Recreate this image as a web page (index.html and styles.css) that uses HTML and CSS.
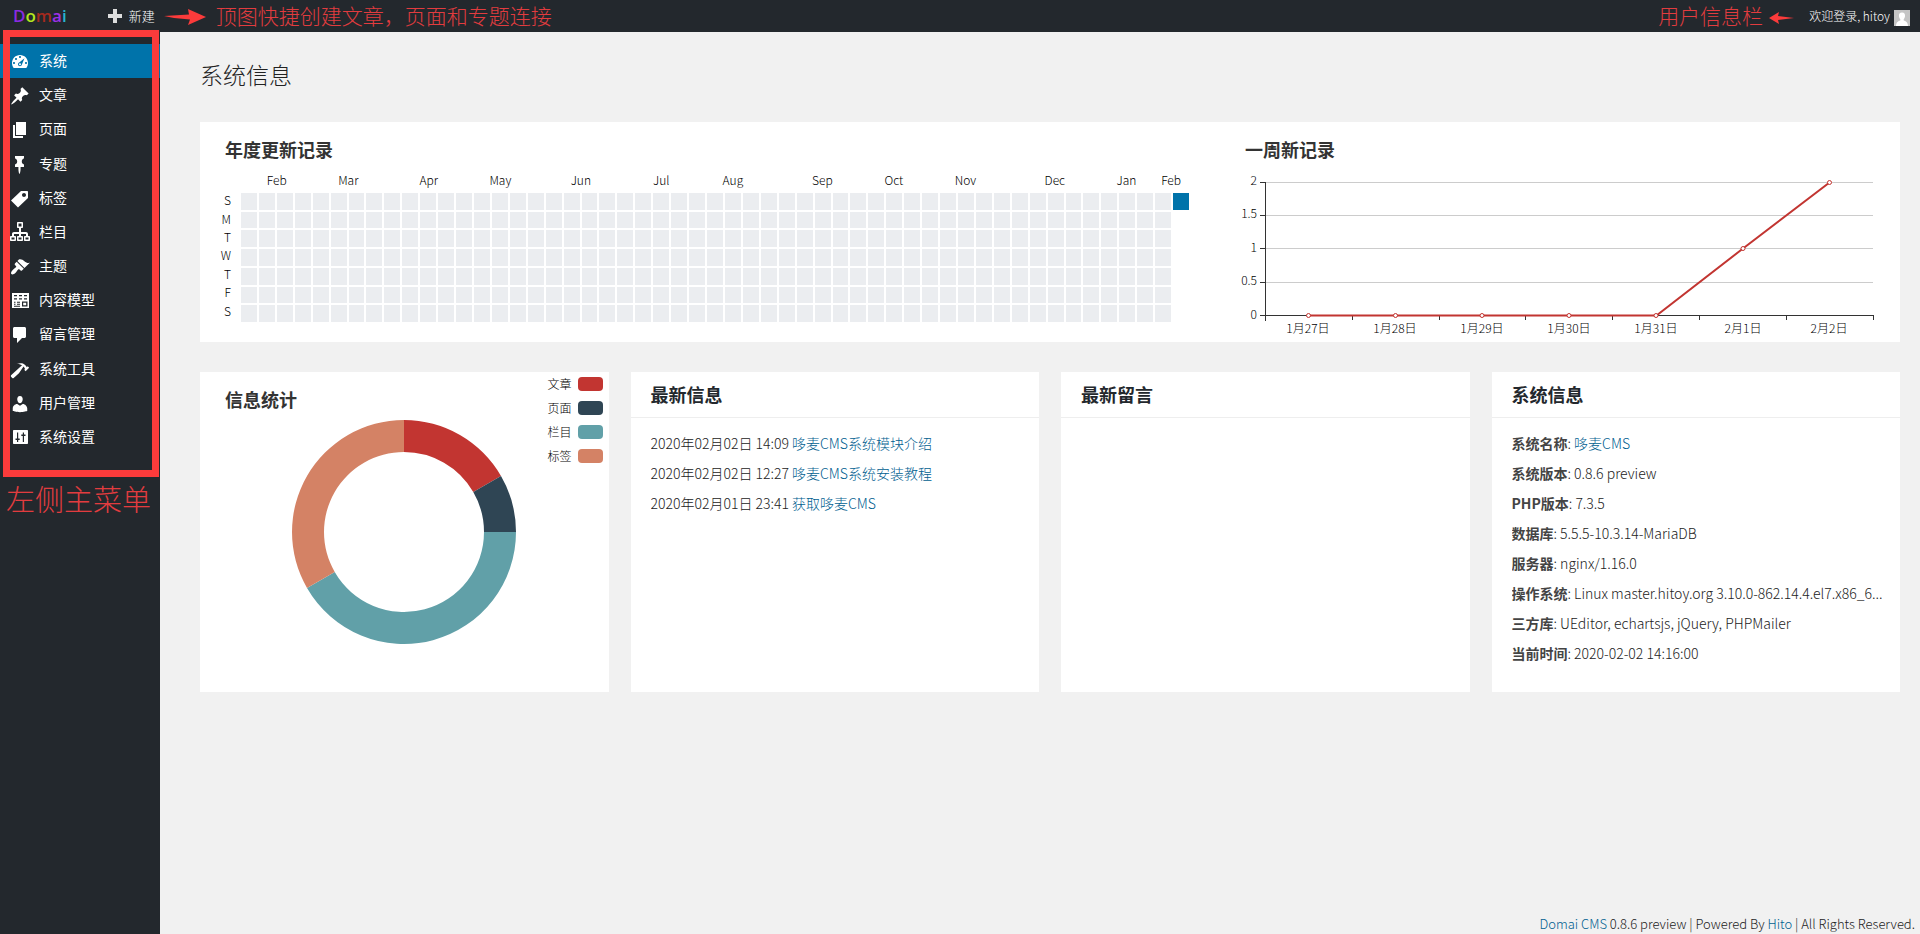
FILE: index.html
```html
<!DOCTYPE html>
<html lang="zh-CN">
<head>
<meta charset="utf-8">
<title>系统信息 - Domai CMS</title>
<link rel="stylesheet" href="styles.css">
</head>
<body>
<header class="topbar">
  <a class="logo" href="#"><span class="logo-d">D</span><span class="logo-o">o</span><span class="logo-m">m</span><span class="logo-a">a</span><span class="logo-i">i</span></a>
  <button class="new-button" type="button">
    <svg class="plus" viewBox="0 0 14 14"><path d="M5 0h4v5h5v4H9v5H5V9H0V5h5z"/></svg>新建
  </button>
  <div class="note note-new">
    <svg class="arrow-new" viewBox="0 0 42 16"><path d="M0 7L25 5.500 24 0 42 8 24 16 26 10.500 10 9z"/></svg>
    <span>顶图快捷创建文章，页面和专题连接</span>
  </div>
  <div class="note note-user">
    <span>用户信息栏</span>
    <svg class="arrow-user" viewBox="0 0 25 12"><path d="M0 6L10 0 9 4 25 6 9 8 10 12z"/></svg>
  </div>
  <a class="user" href="#">欢迎登录, hitoy
    <svg class="avatar" viewBox="0 0 16 16"><path fill="#c4c4c4" d="M0 0h16v16H0z"/><path fill="#fff" d="M8 2.500c2.300 0 3.300 1.700 3 3.800-.2 1.500-.7 2.300-1.300 2.900v1.300c2 .8 4 1.300 4.300 5.500H2c.3-4.200 2.300-4.700 4.300-5.500V9.200C5.700 8.600 5.200 7.800 5 6.300c-.3-2.100.7-3.800 3-3.800z"/></svg>
  </a>
</header>

<div class="shell">
  <aside class="sidebar">
    <nav>
      <ul class="menu">
        <li><a class="menu-link active" href="#"><svg class="icon" viewBox="0 0 20 20"><path fill-rule="evenodd" d="M3.760 16h12.480c1.100-1.370 1.760-3.110 1.760-5 0-4.420-3.580-8-8-8s-8 3.580-8 8c0 1.890.66 3.630 1.760 5zM10 4c.55 0 1 .45 1 1s-.45 1-1 1-1-.45-1-1 .45-1 1-1zM6 6c.55 0 1 .45 1 1s-.45 1-1 1-1-.45-1-1 .45-1 1-1zM14.500 6.200L11.900 12.600c-.2 1-1 1.700-1.900 1.700-1.100 0-2-.9-2-2 0-.8.500-1.500 1.200-1.800zM4 10c.55 0 1 .45 1 1s-.45 1-1 1-1-.45-1-1 .45-1 1-1zm12 0c.55 0 1 .45 1 1s-.45 1-1 1-1-.45-1-1 .45-1 1-1zm-5 2.300c0-.55-.45-1-1-1s-1 .45-1 1 .45 1 1 1 1-.45 1-1z"/></svg>系统</a></li>
        <li><a class="menu-link" href="#"><svg class="icon" viewBox="0 0 20 20"><path d="M10.440 3.020l1.820-1.820 6.360 6.350-1.830 1.820c-1.050-.68-2.480-.57-3.410.36l-.75.75c-.92.93-1.040 2.350-.35 3.410l-1.830 1.820-2.410-2.410-2.800 2.790c-.42.42-3.380 2.710-3.800 2.290s1.860-3.390 2.280-3.810l2.790-2.790L4.100 9.360l1.830-1.820c1.050.69 2.480.57 3.400-.36l.75-.75c.93-.92 1.050-2.350.36-3.410z"/></svg>文章</a></li>
        <li><a class="menu-link" href="#"><svg class="icon" viewBox="0 0 20 20"><path d="M6 15V2h10v13H6zm-1 1h8v2H3V5h2v11z"/></svg>页面</a></li>
        <li><a class="menu-link" href="#"><svg class="icon" viewBox="0 0 20 20"><path d="M5 3.610V1.040l8.990-.01-.01 2.580c-1.220.26-2.160 1.350-2.160 2.670v.5c.01 1.310.93 2.400 2.170 2.660l-.01 2.580h-3.410l-.01 2.570c0 .6-.47 4.410-1.060 4.410-.6 0-1.080-3.810-1.080-4.410v-2.560L5 12.020l.01-2.580c1.230-.25 2.150-1.350 2.150-2.660v-.5c0-1.310-.92-2.410-2.160-2.670z"/></svg>专题</a></li>
        <li><a class="menu-link" href="#"><svg class="icon" viewBox="0 0 20 20"><path fill-rule="evenodd" d="M11 2h6c.6 0 1 .4 1 1v6L8 18.500 1 11.500zm3 6c1.100 0 2-.9 2-2s-.9-2-2-2-2 .9-2 2 .9 2 2 2z"/></svg>标签</a></li>
        <li><a class="menu-link" href="#"><svg class="icon" viewBox="0 0 20 20"><path fill-rule="evenodd" d="M18 13h1c.55 0 1 .45 1 1v3c0 .55-.45 1-1 1h-4c-.55 0-1-.45-1-1v-3c0-.55.45-1 1-1h1v-2h-5v2h1c.55 0 1 .45 1 1v3c0 .55-.45 1-1 1H8c-.55 0-1-.45-1-1v-3c0-.55.45-1 1-1h1v-2H4v2h1c.55 0 1 .45 1 1v3c0 .55-.45 1-1 1H1c-.55 0-1-.45-1-1v-3c0-.55.45-1 1-1h1v-2c0-1.100.9-2 2-2h5V5H8c-.55 0-1-.45-1-1V0c0-.55.45-1 1-1h4c.55 0 1 .45 1 1v4c0 .55-.45 1-1 1h-1v4h5c1.100 0 2 .9 2 2zM8.500.5v3h3v-3zM1.500 14.500v2h3v-2zM8.500 14.500v2h3v-2zM15.500 14.500v2h3v-2z"/></svg>栏目</a></li>
        <li><a class="menu-link" href="#"><svg class="icon" viewBox="0 0 20 20"><path d="M14.480 11.060L7.410 3.990l1.500-1.500c.5-.56 2.300-.47 3.510.32 1.210.8 1.430 1.280 2.910 2.100 1.180.64 2.450 1.260 4.450.85zm-.71.71L6.700 4.700 4.930 6.470c-.39.39-.39 1.020 0 1.410l1.060 1.060c.39.39.39 1.030 0 1.420-.6.6-1.430 1.110-2.210 1.690-.35.26-.7.53-1.010.84C1.430 14.230.4 16.080 1.400 17.070c.99 1 2.840-.03 4.180-1.360.31-.31.58-.66.85-1.020.57-.78 1.080-1.610 1.690-2.210.39-.39 1.020-.39 1.410 0l1.060 1.060c.39.39 1.020.39 1.410 0z"/></svg>主题</a></li>
        <li><a class="menu-link" href="#"><svg class="icon" viewBox="0 0 20 20"><path fill-rule="evenodd" d="M2 2h17v15H2zM4 4v1.200h3V4zM9 4v1.200h3V4zM14 4v1.200h3V4zM4 7.200v1.200h3V7.200zM9 7.200v1.200h3V7.200zM14 7.200v1.200h3V7.200zM4 10.800v.9h1.500v-.9zM7 10.800v.9h3v-.9zM4 12.800v.9h1.500v-.9zM7 12.800v.9h3v-.9zM4 14.800v.9h6v-.9zM12 10.500v5h5.500v-5zM13.200 11.700h3v2.500h-3z"/></svg>内容模型</a></li>
        <li><a class="menu-link" href="#"><svg class="icon" viewBox="0 0 20 20"><path d="M4.500 2h10c.8 0 1.500.7 1.500 1.500v8c0 .8-.7 1.500-1.500 1.500H12l-5 5v-5H4.500c-.8 0-1.500-.7-1.500-1.500v-8C3 2.700 3.700 2 4.500 2z"/></svg>留言管理</a></li>
        <li><a class="menu-link" href="#"><svg class="icon" viewBox="0 0 20 20"><path d="M17.700 6.320l1.410 1.420-3.470 3.410-1.420-1.420.84-.82c-.32-.76-.81-1.570-1.510-2.310l-4.610 6.590-5.260 4.700c-.39.39-1.020.39-1.420 0l-1.200-1.210c-.39-.39-.39-1.020 0-1.410l10.970-9.920c-1.370-.86-3.210-1.460-5.670-1.480 2.700-.82 4.950-.93 6.580-.3 1.700.66 2.820 2.200 3.910 3.580z"/></svg>系统工具</a></li>
        <li><a class="menu-link" href="#"><svg class="icon" viewBox="0 0 20 20"><path d="M10 9.250c-2.270 0-2.730-3.440-2.730-3.440C7 4.020 7.820 2 9.970 2c2.160 0 2.980 2.020 2.710 3.810 0 0-.41 3.440-2.680 3.440zm0 2.570L12.720 10c2.390 0 4.520 2.330 4.520 4.530v2.490s-3.650 1.130-7.240 1.130c-3.650 0-7.240-1.130-7.240-1.130v-2.490c0-2.250 1.940-4.480 4.470-4.480z"/></svg>用户管理</a></li>
        <li><a class="menu-link" href="#"><svg class="icon" viewBox="0 0 20 20"><path fill-rule="evenodd" d="M4 2h13c.6 0 1 .4 1 1v12c0 .6-.4 1-1 1H4c-.6 0-1-.4-1-1V3c0-.6.4-1 1-1zM7 4.500v6H5.500V12H7v2h1.200v-2h1.500v-1.500H8.200v-6zM12.800 4.500v2h-1.500V8h1.500v6H14V8h1.500V6.500H14v-2z"/></svg>系统设置</a></li>
      </ul>
    </nav>
    <div class="menu-frame"><span class="note menu-note">左侧主菜单</span></div>
  </aside>

  <div class="page">
    <main class="content">
      <h1 class="page-title">系统信息</h1>

      <section class="panel charts">
        <div class="year">
          <h2 class="chart-title">年度更新记录</h2>
          <div class="calendar">
            <div class="months" id="months"></div>
            <div class="weekdays"><span>S</span><span>M</span><span>T</span><span>W</span><span>T</span><span>F</span><span>S</span></div>
            <div class="days" id="days"></div>
          </div>
        </div>
        <div class="week">
          <h2 class="chart-title">一周新记录</h2>
          <svg class="line-chart" viewBox="0 0 680 182" role="img" aria-label="一周新记录">
            <path class="grid-line" d="M46 22.500h607M46 55.500h607M46 88.500h607M46 122.500h607"/>
            <path class="axis-line" d="M45.500 22v139M40 22.500h6M40 55.500h6M40 88.500h6M40 122.500h6M40 155.500h613.500M132.500 155v5M219.500 155v5M305.500 155v5M392.500 155v5M479.500 155v5M566.500 155v5M653.500 155v5"/>
            <path class="series" d="M88.500 155.500H436.500L523 88.500 609.500 22.500"/>
            <g class="point"><circle cx="88.500" cy="155.500" r="2"/><circle cx="175.500" cy="155.500" r="2"/><circle cx="262" cy="155.500" r="2"/><circle cx="349" cy="155.500" r="2"/><circle cx="436" cy="155.500" r="2"/><circle cx="523" cy="88.500" r="2"/><circle cx="609.500" cy="22.500" r="2"/></g>
            <g class="axis-y"><text x="37" y="25">2</text><text x="37" y="58">1.5</text><text x="37" y="92">1</text><text x="37" y="125">0.5</text><text x="37" y="159">0</text></g>
            <g class="axis-x"><text x="88" y="173">1月27日</text><text x="175" y="173">1月28日</text><text x="262" y="173">1月29日</text><text x="349" y="173">1月30日</text><text x="436" y="173">1月31日</text><text x="523" y="173">2月1日</text><text x="609" y="173">2月2日</text></g>
          </svg>
        </div>
      </section>

      <div class="cards">
        <section class="panel stats">
          <h2 class="chart-title">信息统计</h2>
          <svg class="donut" viewBox="0 0 224 224" role="img" aria-label="信息统计">
            <path fill="#c23531" d="M112 0A112 112 0 0 1 208.990 56L181.280 72A80 80 0 0 0 112 32z"/>
            <path fill="#2f4554" d="M208.990 56A112 112 0 0 1 224 112H192A80 80 0 0 0 181.280 72z"/>
            <path fill="#61a0a8" d="M224 112A112 112 0 0 1 15.010 168L42.720 152A80 80 0 0 0 192 112z"/>
            <path fill="#d48265" d="M15.010 168A112 112 0 0 1 112 0V32A80 80 0 0 0 42.720 152z"/>
          </svg>
          <ul class="legend">
            <li>文章<i class="swatch red"></i></li>
            <li>页面<i class="swatch navy"></i></li>
            <li>栏目<i class="swatch teal"></i></li>
            <li>标签<i class="swatch orange"></i></li>
          </ul>
        </section>

        <section class="panel">
          <h2 class="card-title">最新信息</h2>
          <ul class="card-list">
            <li>2020年02月02日 14:09 <a href="#">哆麦CMS系统模块介绍</a></li>
            <li>2020年02月02日 12:27 <a href="#">哆麦CMS系统安装教程</a></li>
            <li>2020年02月01日 23:41 <a href="#">获取哆麦CMS</a></li>
          </ul>
        </section>

        <section class="panel">
          <h2 class="card-title">最新留言</h2>
        </section>

        <section class="panel">
          <h2 class="card-title">系统信息</h2>
          <ul class="card-list">
            <li><b>系统名称</b>: <a href="#">哆麦CMS</a></li>
            <li><b>系统版本</b>: 0.8.6 preview</li>
            <li><b>PHP版本</b>: 7.3.5</li>
            <li><b>数据库</b>: 5.5.5-10.3.14-MariaDB</li>
            <li><b>服务器</b>: nginx/1.16.0</li>
            <li><b>操作系统</b>: Linux master.hitoy.org 3.10.0-862.14.4.el7.x86_6...</li>
            <li><b>三方库</b>: UEditor, echartsjs, jQuery, PHPMailer</li>
            <li><b>当前时间</b>: 2020-02-02 14:16:00</li>
          </ul>
        </section>
      </div>
    </main>
    <footer class="footer"><a href="#">Domai CMS</a> 0.8.6 preview | Powered By <a href="#">Hito</a> | All Rights Reserved.</footer>
  </div>
</div>
<script src="calendar.js"></script>
</body>
</html>
```
FILE: styles.css
```css
* { box-sizing: border-box; }

body {
  margin: 0;
  min-height: 100vh;
  display: flex;
  flex-direction: column;
  background: #f1f1f1;
  color: #222;
  font: 300 14px/20px "Noto Sans CJK SC", sans-serif;
}

h1, h2, ul { margin: 0; padding: 0; }
ul { list-style: none; }
a { color: #006090; text-decoration: none; }
b { font-weight: 700; color: #444; }

.topbar {
  display: flex;
  align-items: center;
  height: 32px;
  padding: 0 10px 0 13px;
  background: #23282d;
}

.logo { font: 600 17px/32px "Open Sans", sans-serif; }
.logo-d { color: #8a2be2; }
.logo-o { color: #b4e61e; }
.logo-m { color: #a52a1e; }
.logo-a { color: #9b30e8; }
.logo-i { color: #28b4d2; }

.new-button {
  display: flex;
  align-items: center;
  gap: 7px;
  margin-left: 41px;
  padding: 0;
  border: 0;
  background: none;
  color: #fff;
  font: inherit;
  font-size: 13px;
}
.plus { width: 14px; height: 14px; fill: #ddd; }

.note {
  color: #e23c3f;
  font-size: 21px;
  font-weight: 300;
  line-height: 30px;
}
.note svg { fill: #fb3b3b; }
.note-new, .note-user { display: flex; align-items: center; padding-bottom: 2px; }
.note-new { gap: 10px; margin-left: 9px; }
.note-user { gap: 6px; margin-left: auto; }
.arrow-new { width: 42px; height: 16px; margin-top: 3px; }
.arrow-user { width: 25px; height: 12px; margin-top: 5px; }

.user {
  display: flex;
  align-items: center;
  gap: 4px;
  margin-left: 15px;
  color: #fff;
  font-size: 12px;
}
.avatar { width: 16px; height: 16px; margin-top: 3px; }

.shell { display: flex; flex: 1; }

.sidebar {
  position: relative;
  flex: none;
  width: 160px;
  padding-top: 12px;
  background: #23282d;
}
.menu { display: grid; grid-auto-rows: 1fr; height: 410px; }
.menu-link {
  display: flex;
  align-items: center;
  gap: 9px;
  height: 100%;
  padding: 0 0 2px 10px;
  color: #fff;
  font-weight: 400;
}
.menu-link.active { background: #0073aa; }
.icon { width: 20px; height: 20px; margin-top: 4px; fill: #fff; overflow: visible; }

.menu-frame {
  position: absolute;
  top: -2px;
  left: 3px;
  right: 1px;
  height: 447px;
  border: 7px solid #fb3b3b;
  pointer-events: none;
}
.menu-note {
  position: absolute;
  top: 446px;
  left: -4px;
  font-size: 29px;
  white-space: nowrap;
}

.page { display: flex; flex: 1; flex-direction: column; min-width: 0; }
.content { padding: 27px 20px 20px 40px; }
.page-title {
  margin-bottom: 33px;
  font-size: 23px;
  font-weight: 300;
  line-height: 30px;
}

.panel { background: #fff; min-width: 0; }

.charts { display: grid; grid-template-columns: 3fr 2fr; margin-bottom: 30px; }
.chart-title {
  padding: 17px 25px 1px;
  color: #333;
  font-size: 18px;
  line-height: 20px;
}

.calendar {
  display: grid;
  grid-template-columns: 16px 1fr;
  grid-template-rows: 20px 129px;
  gap: 3px 10px;
  padding: 10px 31px 20px 15px;
  color: #000;
  font-size: 12px;
}
.months { grid-column: 2; display: grid; grid-template-columns: repeat(106, 1fr); }
.months span { grid-row: 1; text-align: center; }
.weekdays {
  display: grid;
  grid-template-rows: repeat(7, 1fr);
  align-items: center;
  margin: -2px 0 2px;
  text-align: right;
  line-height: 16px;
}
.days {
  display: grid;
  grid-auto-flow: column;
  grid-template-rows: repeat(7, 1fr);
  grid-template-columns: repeat(53, 1fr);
  gap: 2px;
}
.days i { background: #ebedf0; }
.days i.updated { background: #0073aa; }

.line-chart { display: block; width: 100%; font-size: 12px; fill: #000; }
.grid-line { stroke: #ccc; }
.axis-line { stroke: #333; }
.series { fill: none; stroke: #c23531; stroke-width: 2; }
.point { fill: #fff; stroke: #c23531; }
.axis-y { text-anchor: end; }
.axis-x { text-anchor: middle; }

.cards {
  display: grid;
  grid-template-columns: repeat(4, 1fr);
  gap: 22px;
  grid-auto-rows: minmax(320px, auto);
}
.stats { display: grid; }
.stats > * { grid-area: 1 / 1; }
.donut { width: 224px; height: 224px; margin-top: 48px; justify-self: center; }
.legend {
  display: grid;
  gap: 4px;
  align-self: start;
  justify-self: end;
  padding: 2px 6px;
  color: #000;
  font-size: 12px;
}
.legend li { display: flex; align-items: center; gap: 6px; }
.swatch { width: 25px; height: 14px; border-radius: 4px; }
.red { background: #c23531; }
.navy { background: #2f4554; }
.teal { background: #61a0a8; }
.orange { background: #d48265; }

.card-title {
  padding: 0 20px;
  border-bottom: 1px solid #eee;
  color: #23282d;
  font-size: 18px;
  line-height: 45px;
}
.card-list { padding: 10px 8px 10px 20px; line-height: 30px; }
.card-list li { overflow: hidden; text-overflow: ellipsis; white-space: nowrap; }

.footer { margin-top: auto; padding-right: 5px; text-align: right; font-size: 13px; }
```
FILE: calendar.js
```js
// Month labels are centred on a line of a grid with two tracks per week.
const months = [["Feb", 4], ["Mar", 12], ["Apr", 21], ["May", 29], ["Jun", 38], ["Jul", 47], ["Aug", 55],
  ["Sep", 65], ["Oct", 73], ["Nov", 81], ["Dec", 91], ["Jan", 99], ["Feb", 104]];
const monthRow = document.getElementById("months");
for (const [name, half] of months) {
  const label = document.createElement("span");
  label.textContent = name;
  label.style.gridColumn = `${half - 1} / ${half + 3}`;
  monthRow.append(label);
}

// 52 full weeks, then the current day.
const days = document.getElementById("days");
for (let n = 0; n <= 52 * 7; n++) {
  const day = document.createElement("i");
  if (n === 52 * 7) day.className = "updated";
  days.append(day);
}
```
